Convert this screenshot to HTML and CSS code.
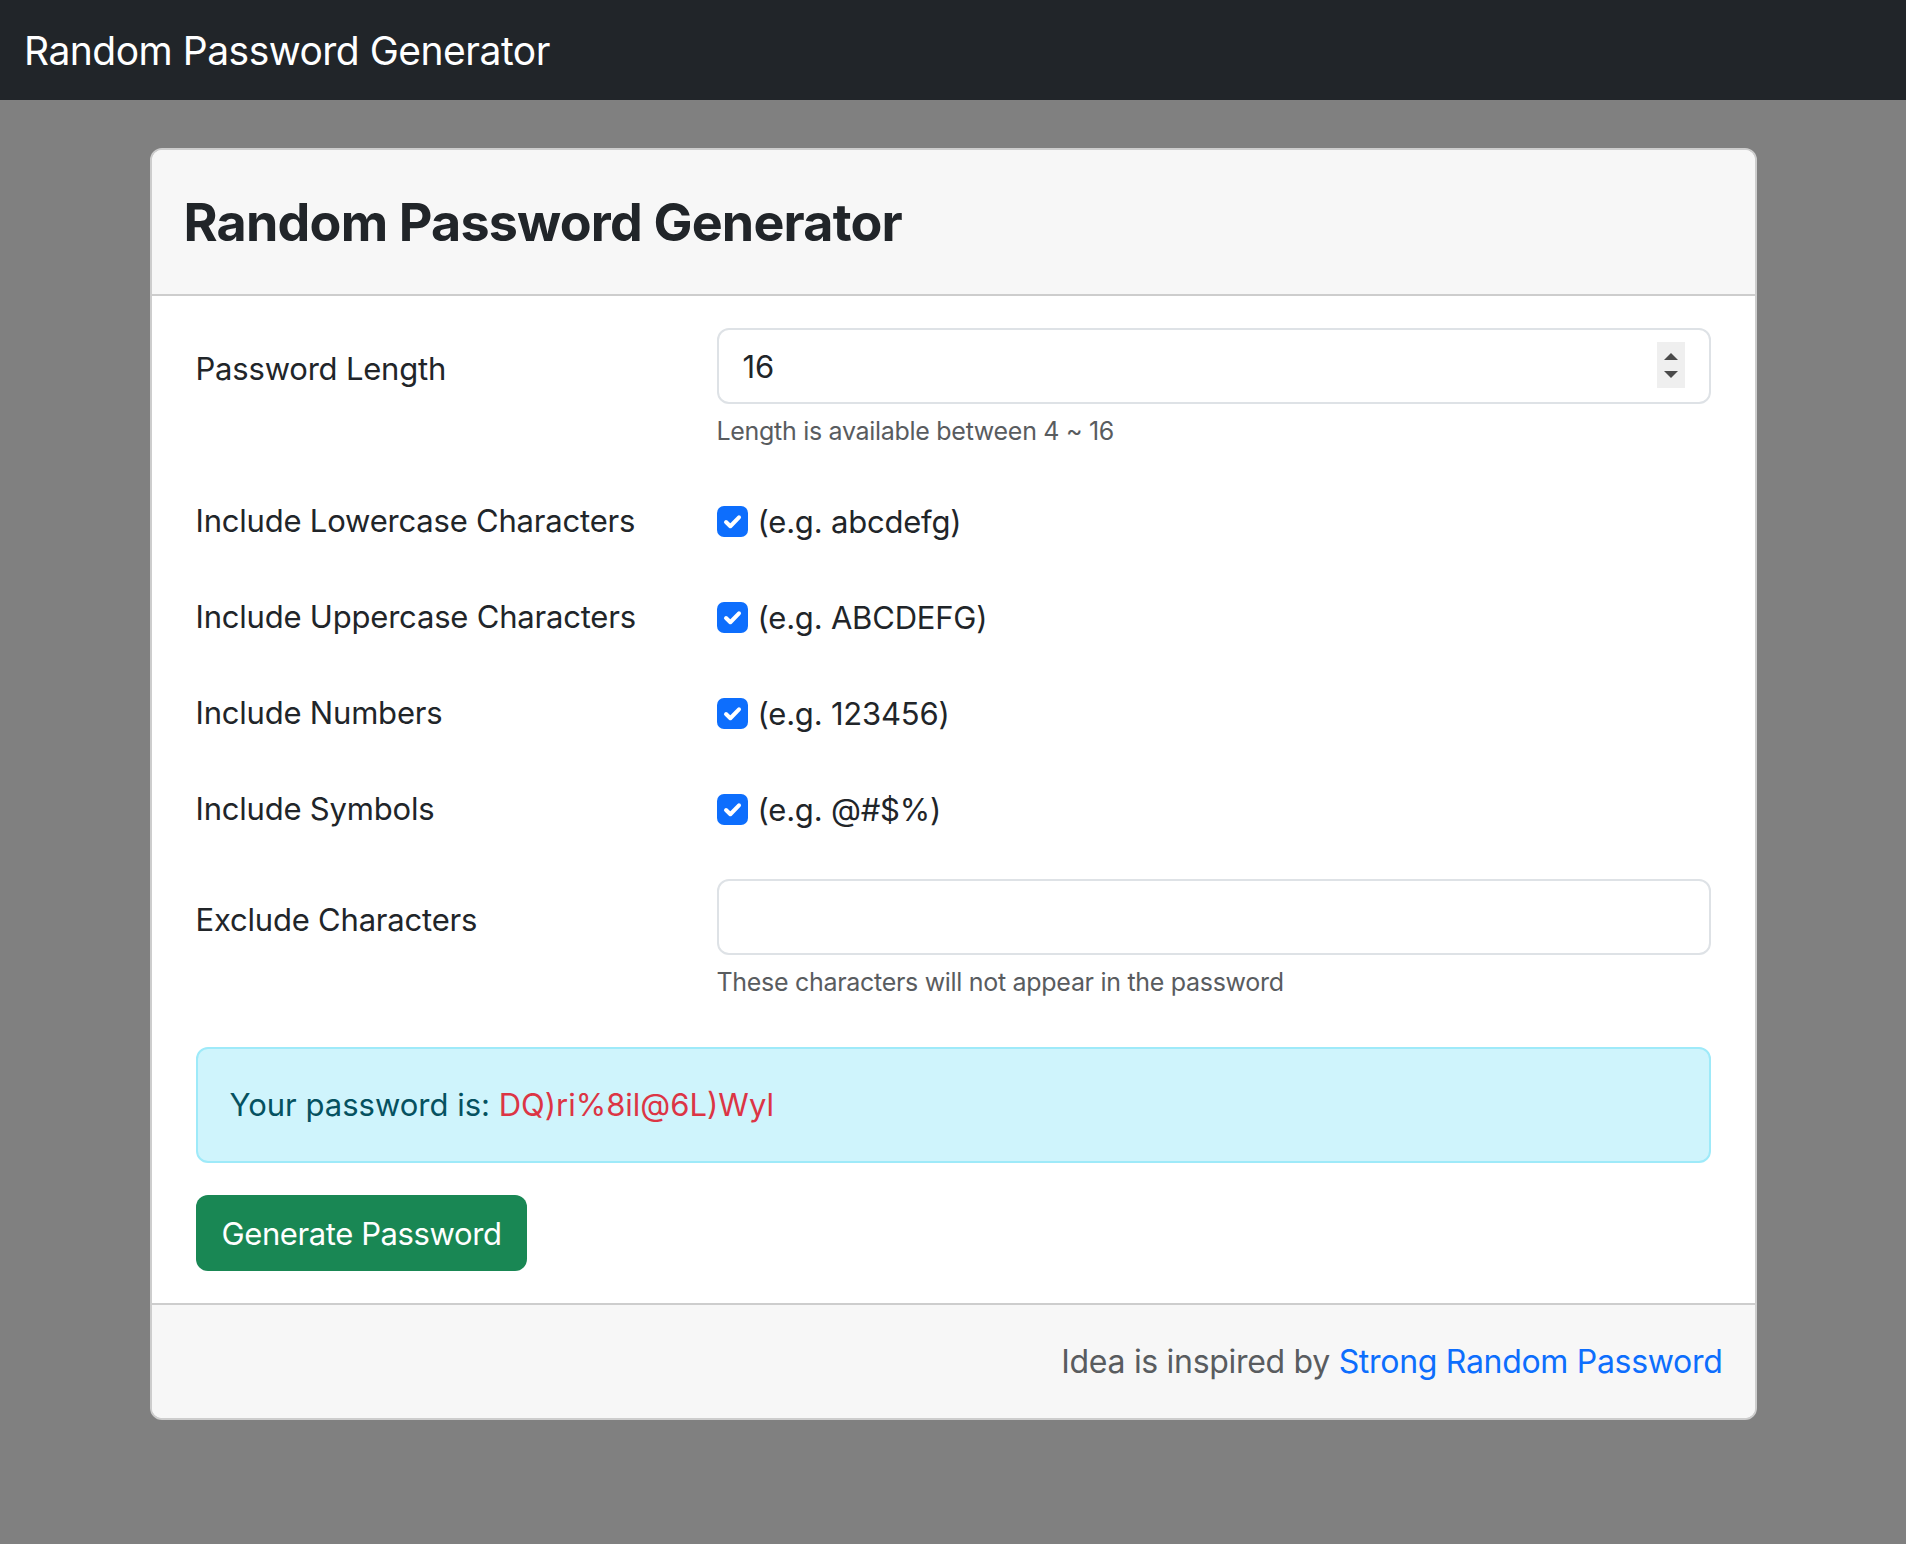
FILE: index.html
```html
<!DOCTYPE html>
<html lang="en">
<head>
<meta charset="utf-8">
<title>Random Password Generator</title>
<link rel="stylesheet" href="styles.css">
</head>
<body>
<nav class="navbar">
  <span class="brand">Random Password Generator</span>
</nav>
<main class="page">
  <section class="card">
    <header class="card-header">
      <h3 class="card-title">Random Password Generator</h3>
    </header>
    <div class="card-body">
      <div class="form-row row-length">
        <label class="row-label" for="len">Password Length</label>
        <div class="field">
          <div class="number-wrap">
            <input id="len" class="form-control" type="text" value="16">
            <span class="spinner"><span class="tri up"></span><span class="tri down"></span></span>
          </div>
          <div class="form-text">Length is available between 4 ~ 16</div>
        </div>
      </div>
      <div class="form-row row-check">
        <span class="row-label">Include Lowercase Characters</span>
        <label class="check"><span class="box"><svg viewBox="0 0 20 20"><path d="M5.2 10.4l3.2 3.1 6.4-6.6" fill="none" stroke="#fff" stroke-width="3" stroke-linecap="round" stroke-linejoin="round"/></svg></span>(e.g. abcdefg)</label>
      </div>
      <div class="form-row row-check">
        <span class="row-label">Include Uppercase Characters</span>
        <label class="check"><span class="box"><svg viewBox="0 0 20 20"><path d="M5.2 10.4l3.2 3.1 6.4-6.6" fill="none" stroke="#fff" stroke-width="3" stroke-linecap="round" stroke-linejoin="round"/></svg></span>(e.g. ABCDEFG)</label>
      </div>
      <div class="form-row row-check">
        <span class="row-label">Include Numbers</span>
        <label class="check"><span class="box"><svg viewBox="0 0 20 20"><path d="M5.2 10.4l3.2 3.1 6.4-6.6" fill="none" stroke="#fff" stroke-width="3" stroke-linecap="round" stroke-linejoin="round"/></svg></span>(e.g. 123456)</label>
      </div>
      <div class="form-row row-check last-check">
        <span class="row-label">Include Symbols</span>
        <label class="check"><span class="box"><svg viewBox="0 0 20 20"><path d="M5.2 10.4l3.2 3.1 6.4-6.6" fill="none" stroke="#fff" stroke-width="3" stroke-linecap="round" stroke-linejoin="round"/></svg></span>(e.g. @#$%)</label>
      </div>
      <div class="form-row row-exclude">
        <label class="row-label" for="exc">Exclude Characters</label>
        <div class="field">
          <input id="exc" class="form-control" type="text" value="">
          <div class="form-text">These characters will not appear in the password</div>
        </div>
      </div>
      <div class="actions">
        <div class="alert">Your password is: <span class="pw">DQ)ri%8il@6L)Wyl</span></div>
        <button class="btn" type="button">Generate Password</button>
      </div>
    </div>
    <footer class="card-footer">
      <span class="muted">Idea is inspired by </span><a class="link" href="#">Strong Random Password</a>
    </footer>
  </section>
</main>
</body>
</html>
```
FILE: styles.css
```css
* { box-sizing: border-box; }
html, body { margin: 0; padding: 0; }
body {
  background: #808080;
  font-family: Inter, "Noto Sans", "Liberation Sans", sans-serif;
  color: #212529;
  min-height: 1544px;
}
.navbar {
  height: 100px;
  background: #212529;
  display: flex;
  align-items: center;
  padding-left: 24px;
}
.brand {
  color: #fff;
  font-size: 39px;
  letter-spacing: -0.5px;
}
.page {
  padding-top: 48px;
}
.card {
  width: 1607px;
  margin: 0 auto;
  background: #fff;
  border: 2px solid #cdcdcd;
  border-radius: 12px;
  overflow: hidden;
}
.card-header {
  background: #f7f7f7;
  border-bottom: 2px solid #cdcdcd;
  height: 146px;
  padding: 0 32px;
  display: flex;
  align-items: center;
}
.card-title {
  margin: 0;
  font-size: 52px;
  font-weight: 700;
  letter-spacing: -0.8px;
  color: #212529;
}
.card-body {
  padding: 32px;
}
.form-row {
  display: grid;
  grid-template-columns: 521px 1fr;
  padding: 0 12px;
}
.row-label {
  font-size: 31px;
  line-height: 76px;
  letter-spacing: -0.2px;
  padding-top: 3px;
}
.row-length { margin-bottom: 37px; }
.row-check {
  height: 64px;
  margin-bottom: 32px;
  align-items: center;
}
.row-check .row-label { line-height: 64px; padding-top: 0; }
.last-check { margin-bottom: 38px; }
.number-wrap { position: relative; }
.form-control {
  display: block;
  width: 100%;
  height: 76px;
  border: 2px solid #dee2e6;
  border-radius: 12px;
  padding: 0 24px;
  font-family: inherit;
  font-size: 31px;
  color: #212529;
  background: #fff;
  outline: none;
}
.spinner {
  position: absolute;
  right: 26px;
  top: 14px;
  width: 28px;
  height: 46px;
  background: #efefef;
  display: flex;
  flex-direction: column;
  align-items: center;
  justify-content: center;
  gap: 11px;
}
.tri {
  width: 0;
  height: 0;
  border-left: 7px solid transparent;
  border-right: 7px solid transparent;
}
.tri.up { border-bottom: 7px solid #4a4a4a; }
.tri.down { border-top: 7px solid #4a4a4a; }
.form-text {
  margin-top: 6px;
  font-size: 25px;
  line-height: 42px;
  color: #595c5f;
  letter-spacing: -0.3px;
}
.check {
  display: flex;
  align-items: center;
  font-size: 31px;
  letter-spacing: -0.2px;
  color: #212529;
}
.box {
  width: 31px;
  height: 31px;
  border-radius: 7px;
  background: #0d6efd;
  margin-right: 10px;
  display: flex;
  align-items: center;
  justify-content: center;
  flex: none;
}
.box svg { width: 27px; height: 27px; display: block; }
.row-exclude { margin-bottom: 44px; }
.actions { padding: 0 12px; }
.alert {
  background: #cff4fc;
  border: 2px solid #9eeaf9;
  border-radius: 12px;
  color: #055160;
  padding: 32px;
  font-size: 31px;
  line-height: 48px;
  letter-spacing: 0;
  margin-bottom: 32px;
}
.pw { color: #dc3545; }
.btn {
  display: block;
  height: 76px;
  padding: 0 26px;
  background: #198754;
  color: #fff;
  border: none;
  border-radius: 12px;
  font-family: inherit;
  font-size: 31px;
  letter-spacing: -0.4px;
}
.card-footer {
  background: #f7f7f7;
  border-top: 2px solid #cdcdcd;
  height: 115px;
  padding: 0 32px;
  display: flex;
  align-items: center;
  justify-content: flex-end;
  font-size: 32px;
  letter-spacing: -0.3px;
}
.muted { color: #595c5f; white-space: pre; }
.link { color: #0d6efd; text-decoration: none; }
```
